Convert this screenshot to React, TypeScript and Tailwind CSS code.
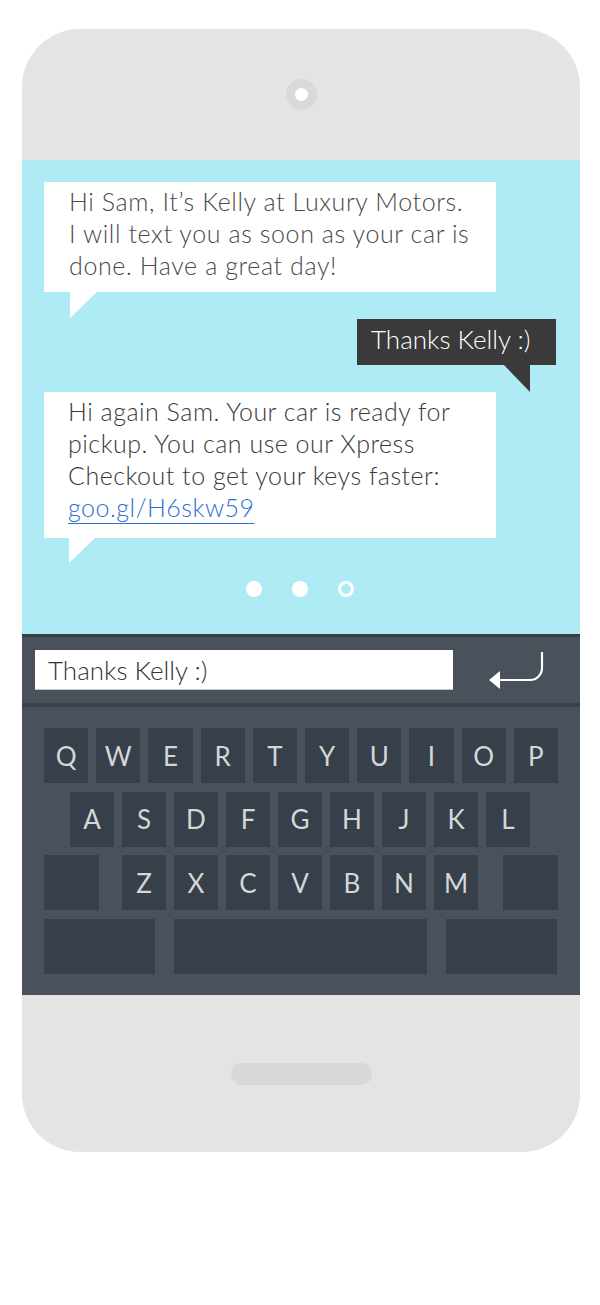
import React from "react";

const row1 = ["Q", "W", "E", "R", "T", "Y", "U", "I", "O", "P"];
const row2 = ["A", "S", "D", "F", "G", "H", "J", "K", "L"];
const row3 = ["Z", "X", "C", "V", "B", "N", "M"];

function Key({ label, className = "" }: { label?: string; className?: string }) {
  return (
    <div
      className={
        "h-[55px] bg-[#363f4a] flex items-center justify-center text-[26px] text-[#d6d6d6] leading-none " +
        className
      }
    >
      {label}
    </div>
  );
}

export default function App() {
  return (
    <div
      className="w-[600px] h-[1305px] bg-white pt-[29px] px-[22px]"
      style={{ fontFamily: "Lato, 'Open Sans', sans-serif" }}
    >
      <div className="w-[558px] h-[1123px] rounded-[58px] bg-[#e4e4e4] overflow-hidden flex flex-col">
        {/* top bezel */}
        <div className="h-[131px] flex justify-center pt-[50px]">
          <div className="w-[31px] h-[31px] rounded-full bg-[#d9d9d9] flex items-center justify-center">
            <div className="w-[13px] h-[13px] rounded-full bg-white" />
          </div>
        </div>

        {/* screen */}
        <div className="h-[474px] bg-[#aeebf5] flex flex-col px-[22px] pt-[22px]">
          {/* bubble 1 */}
          <div className="w-[452px] h-[110px] bg-white pl-[25px] pt-[3px] text-[25px] leading-[32px] tracking-[0.6px] font-light text-[#4a4a4a]">
            Hi Sam, It’s Kelly at Luxury Motors.
            <br />
            I will text you as soon as your car is
            <br />
            done. Have a great day!
          </div>
          <svg width="28" height="26" viewBox="0 0 28 26" className="ml-[26px] block">
            <polygon points="0,0 27,0 0,26" fill="#ffffff" />
          </svg>

          {/* outgoing bubble */}
          <div className="self-end mr-[2px] mt-[1px] flex flex-col items-end">
            <div className="w-[199px] h-[46px] bg-[#3a3a3a] pl-[14px] pt-[5px] text-[26px] leading-[31px] font-light text-white">
              Thanks Kelly :)
            </div>
            <svg width="27" height="27" viewBox="0 0 27 27" className="mr-[25px] block">
              <polygon points="0,0 26,0 26,27" fill="#3a3a3a" />
            </svg>
          </div>

          {/* bubble 2 */}
          <div className="w-[452px] h-[146px] bg-white pl-[24px] pt-[3px] text-[25px] leading-[32px] tracking-[0.5px] text-[#3a3a3a] font-light">
            Hi again Sam. Your car is ready for
            <br />
            pickup. You can use our Xpress
            <br />
            Checkout to get your keys faster:
            <br />
            <span className="text-[#2f6fd6] underline decoration-1 underline-offset-[6px]">goo.gl/H6skw59</span>
          </div>
          <svg width="27" height="25" viewBox="0 0 27 25" className="ml-[25px] block">
            <polygon points="0,0 26,0 0,25" fill="#ffffff" />
          </svg>

          {/* dots */}
          <div className="flex justify-center gap-[30px] mt-[18px] pr-[2px]">
            <div className="w-[16px] h-[16px] rounded-full bg-white" />
            <div className="w-[16px] h-[16px] rounded-full bg-white" />
            <div className="w-[16px] h-[16px] rounded-full border-[3px] border-white" />
          </div>
        </div>

        {/* keyboard */}
        <div className="h-[361px] bg-[#49515b] flex flex-col border-t-[3px] border-[#363e48]">
          <div className="h-[66px] flex items-center pl-[13px] pr-[34px] justify-between">
            <div className="w-[418px] h-[40px] bg-white border-b border-[#c8c8c8] pl-[13px] flex items-center text-[26px] font-light text-[#333333] leading-none">
              Thanks Kelly :)
            </div>
            <svg width="58" height="42" viewBox="0 0 58 42" className="block">
              <path d="M54 3 V19 A12 12 0 0 1 42 31 H11" fill="none" stroke="#ffffff" strokeWidth="2.2" />
              <polygon points="1,31 12,22 12,40" fill="#ffffff" />
            </svg>
          </div>
          <div className="h-[4px] bg-[#39414b]" />
          <div className="flex flex-col gap-[8.5px] px-[22px] pt-[21px]">
            <div className="grid grid-cols-10 gap-[8px]">
              {row1.map((k) => (
                <Key key={k} label={k} />
              ))}
            </div>
            <div className="flex gap-[8px] pl-[26px]">
              {row2.map((k) => (
                <Key key={k} label={k} className="w-[44px]" />
              ))}
            </div>
            <div className="flex gap-[8px]">
              <Key className="w-[55px]" />
              <div className="flex gap-[8px] ml-[15px]">
                {row3.map((k) => (
                  <Key key={k} label={k} className="w-[44px]" />
                ))}
              </div>
              <Key className="w-[55px] ml-auto" />
            </div>
            <div className="flex">
              <Key className="w-[111px]" />
              <Key className="w-[253px] ml-[19px]" />
              <Key className="w-[111px] ml-[19px]" />
            </div>
          </div>
        </div>

        {/* bottom bezel */}
        <div className="flex-1 flex justify-center pt-[68px]">
          <div className="w-[141px] h-[22px] rounded-full bg-[#d8d8d8]" />
        </div>
      </div>
    </div>
  );
}
